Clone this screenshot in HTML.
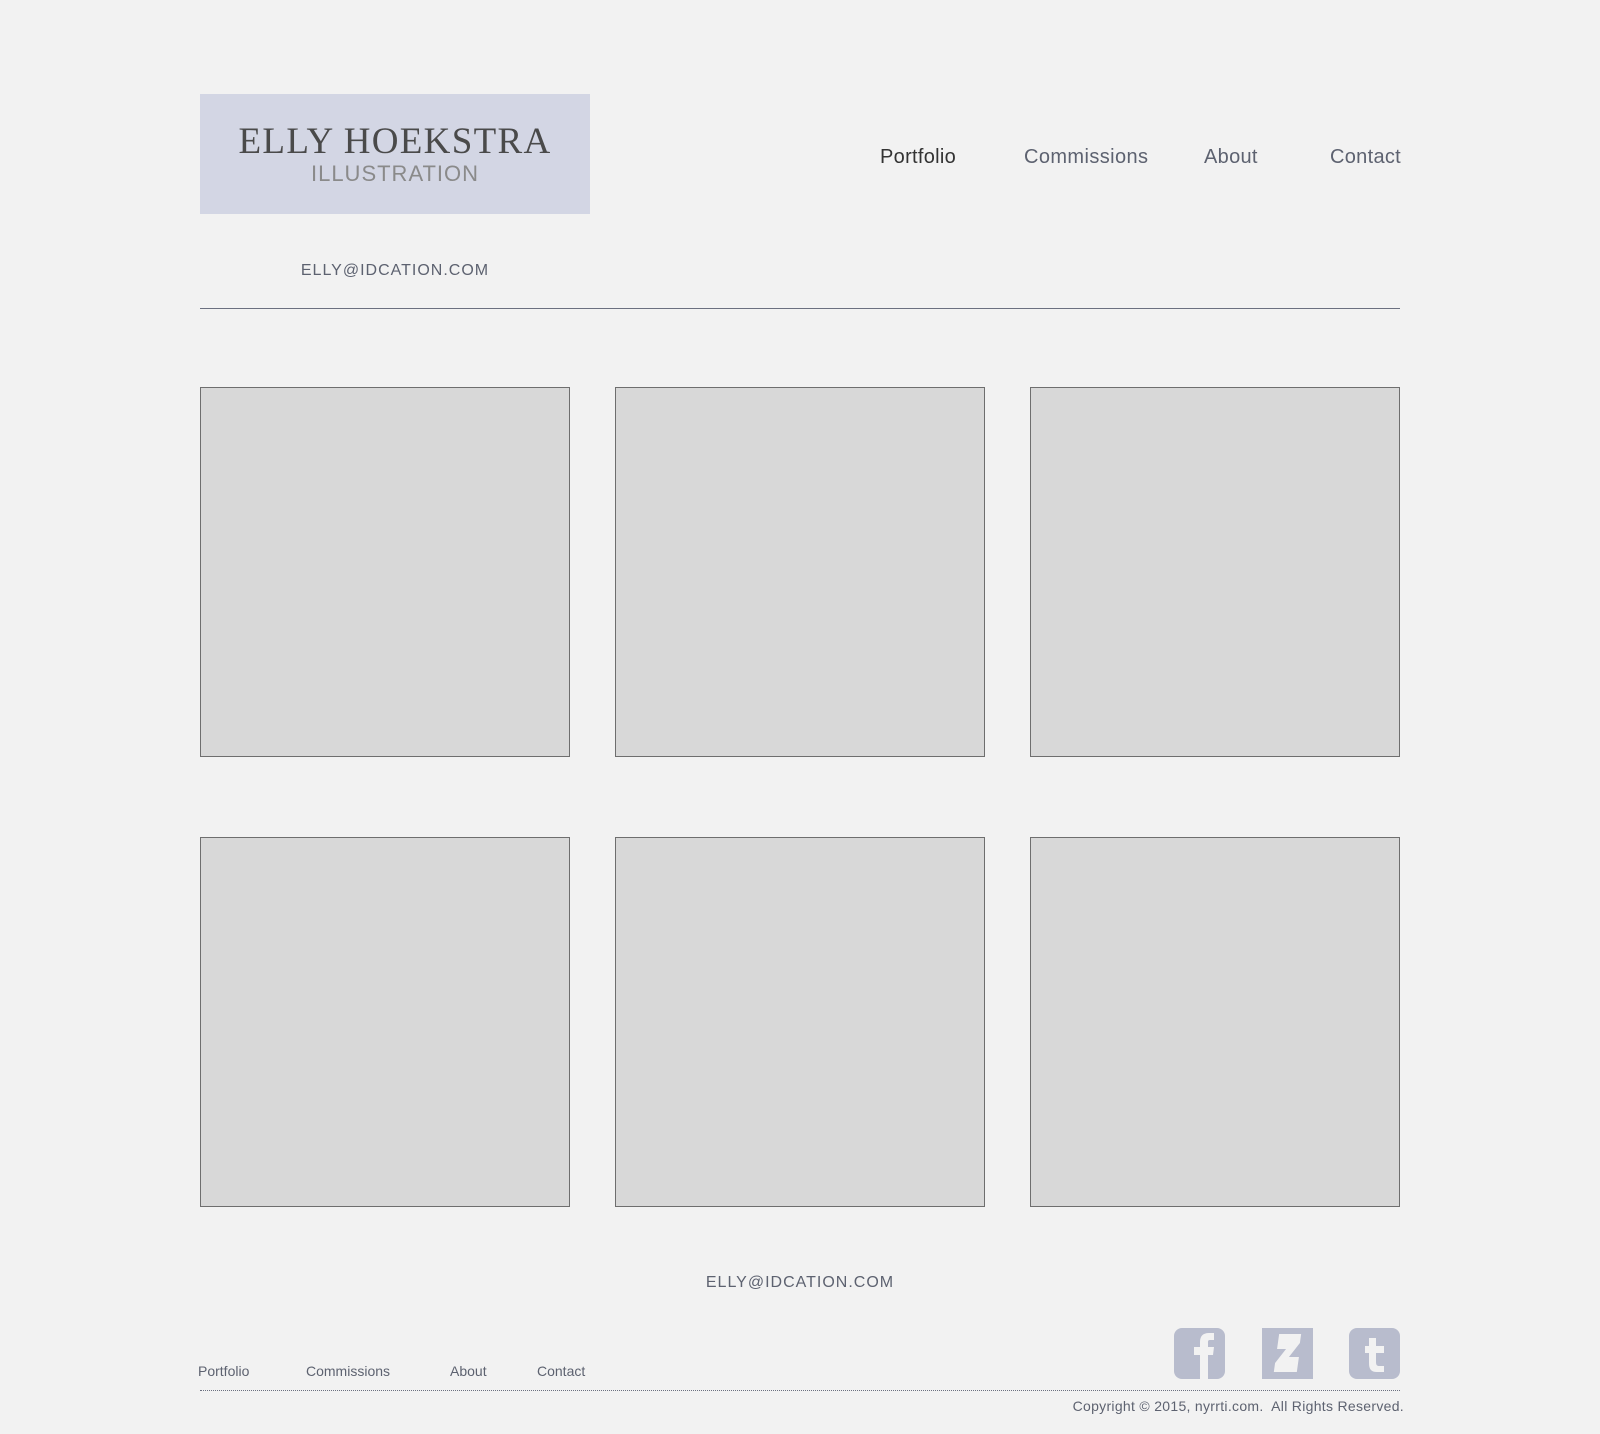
<!DOCTYPE html>
<html><head><meta charset="utf-8"><style>
*{margin:0;padding:0;box-sizing:border-box}
body{width:1600px;height:1434px;background:#f2f2f2;position:relative;overflow:hidden;font-family:"Liberation Sans",sans-serif}
.a{position:absolute;white-space:nowrap}
.logo{left:200px;top:94px;width:390px;height:120px;background:#d3d6e4}
.t1{left:0;width:390px;top:28px;text-align:center;font-family:"Liberation Serif","DejaVu Serif",serif;font-size:37px;letter-spacing:1.3px;color:#4a4a4a;line-height:40px}
.t2{left:0;width:390px;top:67px;text-align:center;font-size:22px;letter-spacing:1px;color:#8a8a8a;line-height:26px}
.nav{top:144px;font-size:20px;color:#5d6270;line-height:26px;letter-spacing:.3px}
.box{background:#d8d8d8;border:1px solid #6e6e6e;width:370px;height:370px}
.fn{top:1362px;font-size:14px;color:#5d6270;line-height:18px}
.ic{width:51px;height:51px;background:#b8bccd;top:1328px}
</style></head><body>
<div class="a logo"><div class="a t1">ELLY HOEKSTRA</div><div class="a t2">ILLUSTRATION</div></div>
<div class="a" style="left:200px;width:390px;top:262px;text-align:center;font-size:16px;letter-spacing:1px;color:#5d6270">ELLY@IDCATION.COM</div>
<div class="a nav" style="left:880px;color:#333">Portfolio</div>
<div class="a nav" style="left:1024px;letter-spacing:.4px">Commissions</div>
<div class="a nav" style="left:1204px">About</div>
<div class="a nav" style="left:1330px">Contact</div>
<div class="a" style="left:200px;top:308px;width:1200px;height:1px;background:#6b7080"></div>
<div class="a box" style="left:200px;top:387px"></div>
<div class="a box" style="left:615px;top:387px"></div>
<div class="a box" style="left:1030px;top:387px"></div>
<div class="a box" style="left:200px;top:837px"></div>
<div class="a box" style="left:615px;top:837px"></div>
<div class="a box" style="left:1030px;top:837px"></div>
<div class="a" style="left:0;width:1600px;top:1274px;text-align:center;font-size:16px;letter-spacing:1px;color:#5d6270">ELLY@IDCATION.COM</div>
<div class="a fn" style="left:198px">Portfolio</div>
<div class="a fn" style="left:306px">Commissions</div>
<div class="a fn" style="left:450px">About</div>
<div class="a fn" style="left:537px">Contact</div>
<div class="a ic" style="left:1174px;border-radius:8px"><svg width="51" height="51"><path d="M26 51V27h-6v-8h6v-5c0-6 3-9 9-9h5v7h-4c-2 0-2 1-2 3v4h6l-1 8h-5v24z" fill="#f2f2f2"/></svg></div>
<div class="a ic" style="left:1262px"><svg width="51" height="51"><path d="M14 6h22v9l-9 14h10v15H14v-9l9-14H14z" fill="#f2f2f2" transform="skewX(-8) translate(4 0)"/></svg></div>
<div class="a ic" style="left:1349px;border-radius:8px"><svg width="51" height="51"><path d="M20 10h7v8h8v7h-8v9c0 3 1 4 3 4h5v6h-7c-6 0-8-3-8-9v-10h-4v-7h4z" fill="#f2f2f2"/></svg></div>
<div class="a" style="left:200px;top:1390px;width:1200px;border-top:1px dotted #6b7080"></div>
<div class="a" style="right:196px;top:1398px;font-size:14px;color:#5d6270;letter-spacing:.3px">Copyright © 2015, nyrrti.com.&nbsp; All Rights Reserved.</div>
</body></html>
